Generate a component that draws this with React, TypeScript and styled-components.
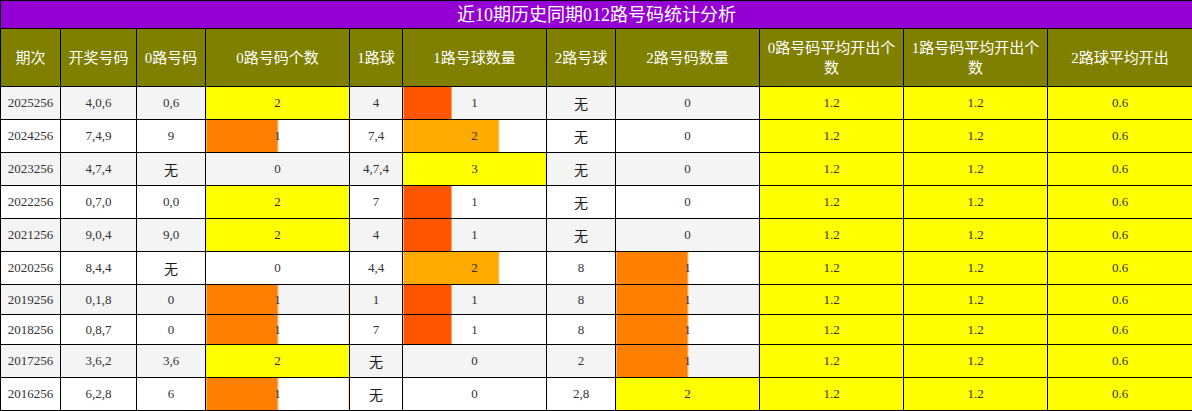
import React from "react";
import styled, { createGlobalStyle } from "styled-components";

const Global = createGlobalStyle`
  html, body { margin: 0; padding: 0; background: #fff; }
  body { font-family: "Liberation Serif", "Noto Sans CJK SC", serif; }
`;

const Table = styled.table`
  border-collapse: collapse;
  table-layout: fixed;
  width: 1192px;
  font-family: "Liberation Serif", "Noto Sans CJK SC", serif;
`;

const TitleCell = styled.th`
  background: #9400d3;
  color: #fff;
  font-size: 18px;
  font-weight: normal;
  height: 27px;
  padding: 0;
  border: 1px solid #000;
  line-height: 26px;
`;

const HeadCell = styled.th`
  background: #808000;
  color: #fff;
  font-size: 15px;
  font-weight: normal;
  line-height: 20px;
  height: 57px;
  padding: 0 6px;
  border: 1px solid #000;
`;

const Row = styled.tr<{ $alt: boolean; $tall: boolean }>`
  background: ${(p) => (p.$alt ? "#f4f4f4" : "#ffffff")};
  & > td { height: ${(p) => (p.$tall ? 32 : 29)}px; }
`;

const Cell = styled.td<{ $yellow?: boolean }>`
  border: 1px solid #000;
  padding: 0;
  text-align: center;
  font-size: 13px;
  color: #333;
  ${(p) => (p.$yellow ? "background: #ffff00;" : "")}
`;

const None = styled.span`
  font-size: 14px;
  font-weight: 400;
  color: #1a1a1a;
`;

const BarCell = styled.td<{ $color: string; $pct: number; $edge: boolean }>`
  border: 1px solid #000;
  padding: 0;
  text-align: center;
  font-size: 13px;
  color: #333;
  background-image: ${(p) =>
    p.$pct >= 100
      ? `linear-gradient(${p.$color}, ${p.$color})`
      : p.$pct <= 0
      ? "none"
      : `linear-gradient(to right, ${p.$color} 0, ${p.$color} ${p.$pct}%, #ffc890 ${p.$pct}%, transparent calc(${p.$pct}% + 1px))${
          p.$edge ? ", linear-gradient(to left, #ffb070 0, #ffb070 1px, transparent 1px)" : ""
        }`};
`;

type R = {
  q: string;
  n: string;
  z: string;
  zc: number;
  o: string;
  oc: number;
  t: string;
  tc: number;
};

const rows: R[] = [
  { q: "2025256", n: "4,0,6", z: "0,6", zc: 2, o: "4", oc: 1, t: "无", tc: 0 },
  { q: "2024256", n: "7,4,9", z: "9", zc: 1, o: "7,4", oc: 2, t: "无", tc: 0 },
  { q: "2023256", n: "4,7,4", z: "无", zc: 0, o: "4,7,4", oc: 3, t: "无", tc: 0 },
  { q: "2022256", n: "0,7,0", z: "0,0", zc: 2, o: "7", oc: 1, t: "无", tc: 0 },
  { q: "2021256", n: "9,0,4", z: "9,0", zc: 2, o: "4", oc: 1, t: "无", tc: 0 },
  { q: "2020256", n: "8,4,4", z: "无", zc: 0, o: "4,4", oc: 2, t: "8", tc: 1 },
  { q: "2019256", n: "0,1,8", z: "0", zc: 1, o: "1", oc: 1, t: "8", tc: 1 },
  { q: "2018256", n: "0,8,7", z: "0", zc: 1, o: "7", oc: 1, t: "8", tc: 1 },
  { q: "2017256", n: "3,6,2", z: "3,6", zc: 2, o: "无", oc: 0, t: "2", tc: 1 },
  { q: "2016256", n: "6,2,8", z: "6", zc: 1, o: "无", oc: 0, t: "2,8", tc: 2 },
];

const widths = [60, 76, 69, 144, 53, 144, 69, 144, 144, 144, 145];

const headers = [
  "期次",
  "开奖号码",
  "0路号码",
  "0路号码个数",
  "1路球",
  "1路号球数量",
  "2路号球",
  "2路号码数量",
  "0路号码平均开出个数",
  "1路号码平均开出个数",
  "2路球平均开出",
];

const barColor = (v: number, max: number) => {
  const f = v / max;
  if (f >= 1) return "#ffff00";
  if (f > 0.6) return "#ffaa00";
  if (f > 0.4) return "#ff8000";
  return "#ff5500";
};

const Txt = ({ v }: { v: string }) => (v === "无" ? <None>无</None> : <>{v}</>);

const Bar = ({ v, max, edge }: { v: number; max: number; edge: boolean }) => (
  <BarCell $color={barColor(v, max)} $pct={(v / max) * 100} $edge={edge && v > 0 && v < max}>
    {v}
  </BarCell>
);

export default function App() {
  return (
    <>
      <Global />
      <Table>
        <colgroup>
          {widths.map((w, i) => (
            <col key={i} style={{ width: w }} />
          ))}
        </colgroup>
        <thead>
          <tr>
            <TitleCell colSpan={11}>近10期历史同期012路号码统计分析</TitleCell>
          </tr>
          <tr>
            {headers.map((h) => (
              <HeadCell key={h}>{h}</HeadCell>
            ))}
          </tr>
        </thead>
        <tbody>
          {rows.map((r, i) => {
            const tall = [r.z, r.o, r.t].includes("无");
            return (
              <Row key={r.q} $alt={i % 2 === 0} $tall={tall}>
                <Cell>{r.q}</Cell>
                <Cell>{r.n}</Cell>
                <Cell>
                  <Txt v={r.z} />
                </Cell>
                <Bar v={r.zc} max={2} edge />
                <Cell>
                  <Txt v={r.o} />
                </Cell>
                <Bar v={r.oc} max={3} edge={false} />
                <Cell>
                  <Txt v={r.t} />
                </Cell>
                <Bar v={r.tc} max={2} edge />
                <Cell $yellow>1.2</Cell>
                <Cell $yellow>1.2</Cell>
                <Cell $yellow>0.6</Cell>
              </Row>
            );
          })}
        </tbody>
      </Table>
    </>
  );
}
